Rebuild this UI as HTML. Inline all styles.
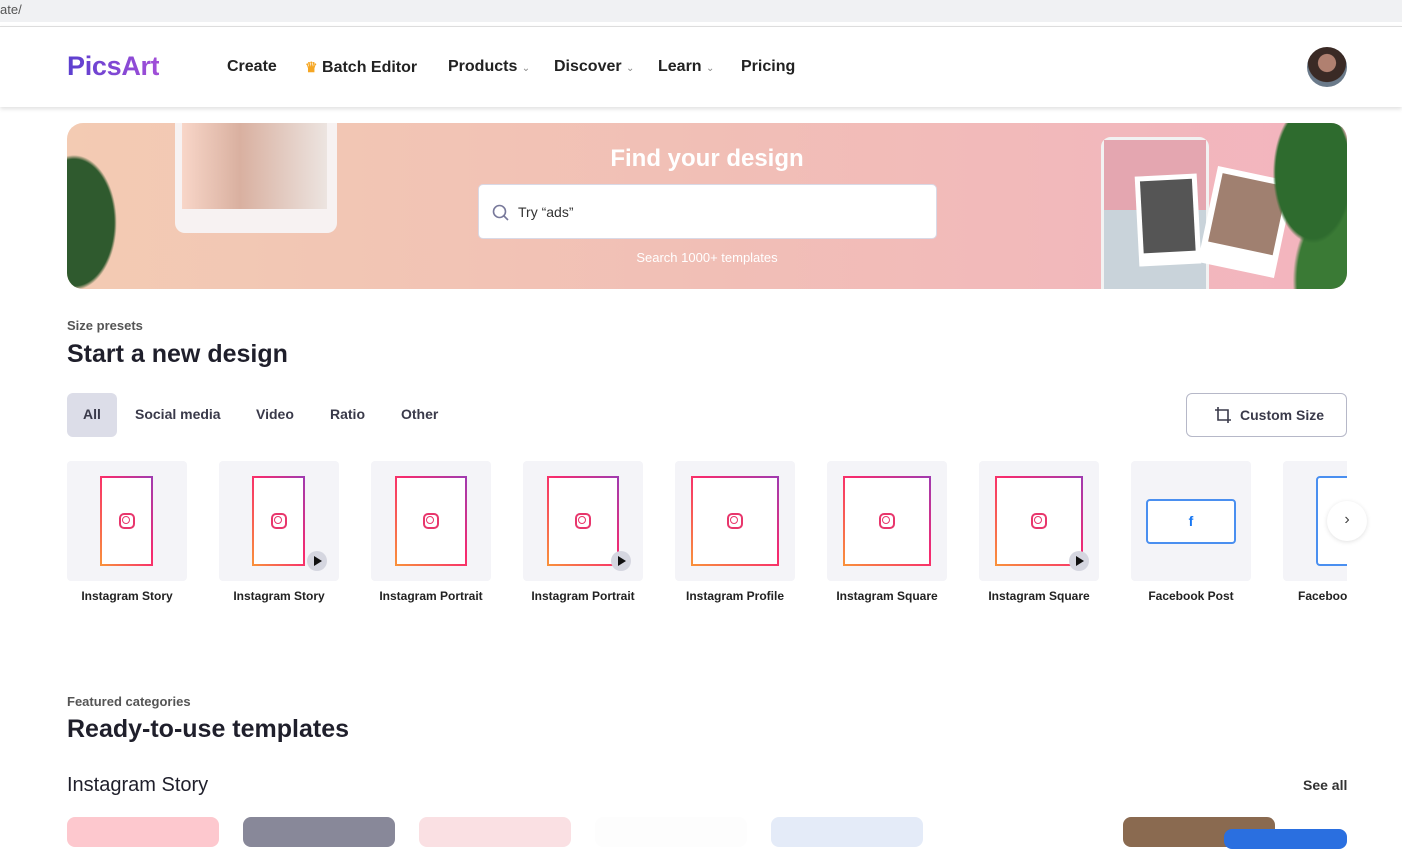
<!DOCTYPE html>
<html><head><meta charset="utf-8"><style>
*{margin:0;padding:0;box-sizing:border-box}
body{width:1402px;height:838px;overflow:hidden;background:#fff;font-family:"Liberation Sans",sans-serif;color:#1f1f2b;position:relative}
.abs{position:absolute}
.url{left:0;top:0;width:1402px;height:22px;background:#f0f1f3;font-size:13px;color:#555;padding:2px 0 0 0}
.hdr{left:0;top:26px;width:1402px;height:81px;border-top:1px solid #ddd;box-shadow:0 2px 4px rgba(0,0,0,.12);background:#fff}
.nav{font-size:16px;font-weight:bold;color:#222;top:58px;line-height:18px}
.chev{font-size:10px;color:#888;font-weight:normal}
.tabs span{position:absolute;top:406px;font-size:14px;font-weight:bold;color:#3a3a4a}
.tile{position:absolute;top:461px;width:120px;height:120px;background:#f4f4f8;border-radius:4px}
.lab{position:absolute;top:589px;width:120px;text-align:center;font-size:12px;font-weight:bold;color:#222;white-space:nowrap}
.fr{position:absolute;top:15px;height:90px;border:2px solid;border-image:linear-gradient(to top right,#f9913b,#f72a6e 55%,#a03ab0) 1;background:#fff}
.ig{position:absolute;left:50%;top:50%;width:16px;height:16px;margin:-8px 0 0 -8px;border:2px solid #e8366c;border-radius:5px}
.ig:after{content:"";position:absolute;left:2px;top:2px;width:6px;height:6px;border:1.5px solid #e8366c;border-radius:50%;box-sizing:content-box;margin:-1px}
.play{position:absolute;width:20px;height:20px;border-radius:50%;background:#d5d6e0;top:90px}
.play:after{content:"";position:absolute;left:7px;top:5px;border-left:8px solid #111;border-top:5px solid transparent;border-bottom:5px solid transparent}
</style></head><body>
<div class="abs url">ate/</div>
<div class="abs hdr"></div>
<div class="abs" style="left:67px;top:51px;font-size:27px;font-weight:bold;letter-spacing:-.3px;background:linear-gradient(90deg,#5b3fcf,#a24fd8);-webkit-background-clip:text;color:transparent">PicsArt</div>
<div class="abs nav" style="left:227px">Create</div>
<div class="abs nav" style="left:305px"><span style="color:#f5a623;font-size:14px">♛</span> Batch Editor</div>
<div class="abs nav" style="left:448px">Products <span class="chev">⌄</span></div>
<div class="abs nav" style="left:554px">Discover <span class="chev">⌄</span></div>
<div class="abs nav" style="left:658px">Learn <span class="chev">⌄</span></div>
<div class="abs nav" style="left:741px">Pricing</div>
<div class="abs" style="left:1307px;top:47px;width:40px;height:40px;border-radius:50%;background:radial-gradient(circle at 50% 40%,#b08070 0 28%,#3a2a25 30% 60%,#6a7a8a 62%)"></div>

<div class="abs" style="left:67px;top:123px;width:1280px;height:166px;border-radius:16px;overflow:hidden;background:linear-gradient(90deg,#f3cbb3,#f1bfb6 50%,#f3b4bf)">
 <div class="abs" style="left:-20px;top:0;width:90px;height:166px;background:radial-gradient(ellipse at 30% 60%,#2f5a2e 0 45%,transparent 48%)"></div>
 <div class="abs" style="left:108px;top:-10px;width:162px;height:120px;background:#f7f2f2;border-radius:10px"></div>
 <div class="abs" style="left:115px;top:0;width:145px;height:86px;background:linear-gradient(90deg,#f8d6c8,#d9b0a0 40%,#ece4e0)"></div>
 <div class="abs" style="left:0;top:22px;width:1280px;text-align:center;font-size:24px;font-weight:bold;color:#fff">Find your design</div>
 <div class="abs" style="left:411px;top:61px;width:459px;height:55px;background:#fff;border:1px solid #d9d9e6;border-radius:5px;font-size:14px;color:#333;padding:19px 0 0 39px">Try “ads”
  <svg class="abs" style="left:13px;top:19px" width="18" height="18" viewBox="0 0 18 18"><circle cx="7.5" cy="7.5" r="6" fill="none" stroke="#77789a" stroke-width="1.6"/><path d="M12 12l4 4" stroke="#77789a" stroke-width="1.6"/></svg></div>
 <div class="abs" style="left:0;top:127px;width:1280px;text-align:center;font-size:13px;color:#fff">Search 1000+ templates</div>
 <div class="abs" style="left:1034px;top:14px;width:108px;height:170px;background:#c9d3da;border:3px solid #f2f2f2;border-radius:10px"></div>
 <div class="abs" style="left:1037px;top:17px;width:102px;height:70px;background:#e4a6b0"></div>
 <div class="abs" style="left:1070px;top:52px;width:62px;height:90px;background:#fff;transform:rotate(-3deg)"><div style="margin:5px;height:72px;background:#555"></div></div>
 <div class="abs" style="left:1140px;top:50px;width:78px;height:98px;background:#fff;transform:rotate(12deg)"><div style="margin:6px;height:70px;background:#a08070"></div></div>
 <div class="abs" style="left:1180px;top:0;width:110px;height:166px;background:radial-gradient(ellipse at 60% 30%,#2e6b2e 0 40%,transparent 43%),radial-gradient(ellipse at 90% 95%,#3a7a35 0 35%,transparent 38%)"></div>
</div>

<div class="abs" style="left:67px;top:318px;font-size:13px;color:#555;font-weight:bold">Size presets</div>
<div class="abs" style="left:67px;top:340px;font-size:25px;font-weight:bold;color:#1f1f2b">Start a new design</div>
<div class="abs" style="left:67px;top:393px;width:50px;height:44px;background:#dcdde8;border-radius:6px"></div>
<div class="tabs"><span style="left:83px">All</span><span style="left:135px">Social media</span><span style="left:256px">Video</span><span style="left:330px">Ratio</span><span style="left:401px">Other</span></div>
<div class="abs" style="left:1186px;top:393px;width:161px;height:44px;border:1px solid #b6b8c8;border-radius:6px;font-size:14px;font-weight:bold;color:#3a3a4a;padding:13px 0 0 53px">Custom Size
 <svg class="abs" style="left:27px;top:12px" width="18" height="18" viewBox="0 0 18 18" fill="none" stroke="#3a3a4a" stroke-width="1.6"><path d="M4 1v13h13M1 4h13v13"/></svg></div>

<div class="abs" style="left:67px;top:461px;width:1280px;height:160px;overflow:hidden">
<div style="position:relative;left:-67px;top:-461px">
<div class="tile" style="left:67px"><div class="fr" style="left:33px;width:53px"><div class="ig"></div></div></div>
<div class="tile" style="left:219px"><div class="fr" style="left:33px;width:53px"><div class="ig"></div></div><div class="play" style="left:88px"></div></div>
<div class="tile" style="left:371px"><div class="fr" style="left:24px;width:72px"><div class="ig"></div></div></div>
<div class="tile" style="left:523px"><div class="fr" style="left:24px;width:72px"><div class="ig"></div></div><div class="play" style="left:88px"></div></div>
<div class="tile" style="left:675px"><div class="fr" style="left:16px;width:88px"><div class="ig"></div></div></div>
<div class="tile" style="left:827px"><div class="fr" style="left:16px;width:88px"><div class="ig"></div></div></div>
<div class="tile" style="left:979px"><div class="fr" style="left:16px;width:88px"><div class="ig"></div></div><div class="play" style="left:90px"></div></div>
<div class="tile" style="left:1131px"><div style="position:absolute;left:15px;top:38px;width:90px;height:45px;border:2px solid #4a8ff0;border-radius:4px;background:#fff;text-align:center;color:#1877f2;font-weight:bold;font-size:14px;line-height:41px">f</div></div>
<div class="tile" style="left:1283px"><div style="position:absolute;left:33px;top:15px;width:90px;height:90px;border:2px solid #4a8ff0;border-radius:4px;background:#fff"></div></div>
<div class="lab" style="left:67px">Instagram Story</div>
<div class="lab" style="left:219px">Instagram Story</div>
<div class="lab" style="left:371px">Instagram Portrait</div>
<div class="lab" style="left:523px">Instagram Portrait</div>
<div class="lab" style="left:675px">Instagram Profile</div>
<div class="lab" style="left:827px">Instagram Square</div>
<div class="lab" style="left:979px">Instagram Square</div>
<div class="lab" style="left:1131px">Facebook Post</div>
<div class="lab" style="left:1283px;text-align:left;padding-left:15px">Facebook Cover</div>
</div></div>
<div class="abs" style="left:1327px;top:501px;width:40px;height:40px;border-radius:50%;background:#fff;box-shadow:0 1px 5px rgba(0,0,0,.12);text-align:center;line-height:38px;color:#444;font-size:16px">›</div>

<div class="abs" style="left:67px;top:694px;font-size:13px;color:#555;font-weight:bold">Featured categories</div>
<div class="abs" style="left:67px;top:715px;font-size:25px;font-weight:bold;color:#1f1f2b">Ready-to-use templates</div>
<div class="abs" style="left:67px;top:774px;font-size:20px;color:#1f1f2b">Instagram Story</div>
<div class="abs" style="left:1303px;top:777px;font-size:14px;font-weight:bold;color:#333">See all</div>
<div class="abs" style="left:67px;top:817px;width:152px;height:30px;background:#fdc8ce;border-radius:8px"></div>
<div class="abs" style="left:243px;top:817px;width:152px;height:30px;background:#888899;border-radius:8px"></div>
<div class="abs" style="left:419px;top:817px;width:152px;height:30px;background:#fae0e3;border-radius:8px"></div>
<div class="abs" style="left:595px;top:817px;width:152px;height:30px;background:#fdfdfd;border-radius:8px"></div>
<div class="abs" style="left:771px;top:817px;width:152px;height:30px;background:#e4ebf8;border-radius:8px"></div>
<div class="abs" style="left:1123px;top:817px;width:152px;height:30px;background:#8a6a50;border-radius:8px"></div>
<div class="abs" style="left:1224px;top:829px;width:123px;height:20px;background:#2a6fe0;border-radius:8px"></div>
</body></html>
